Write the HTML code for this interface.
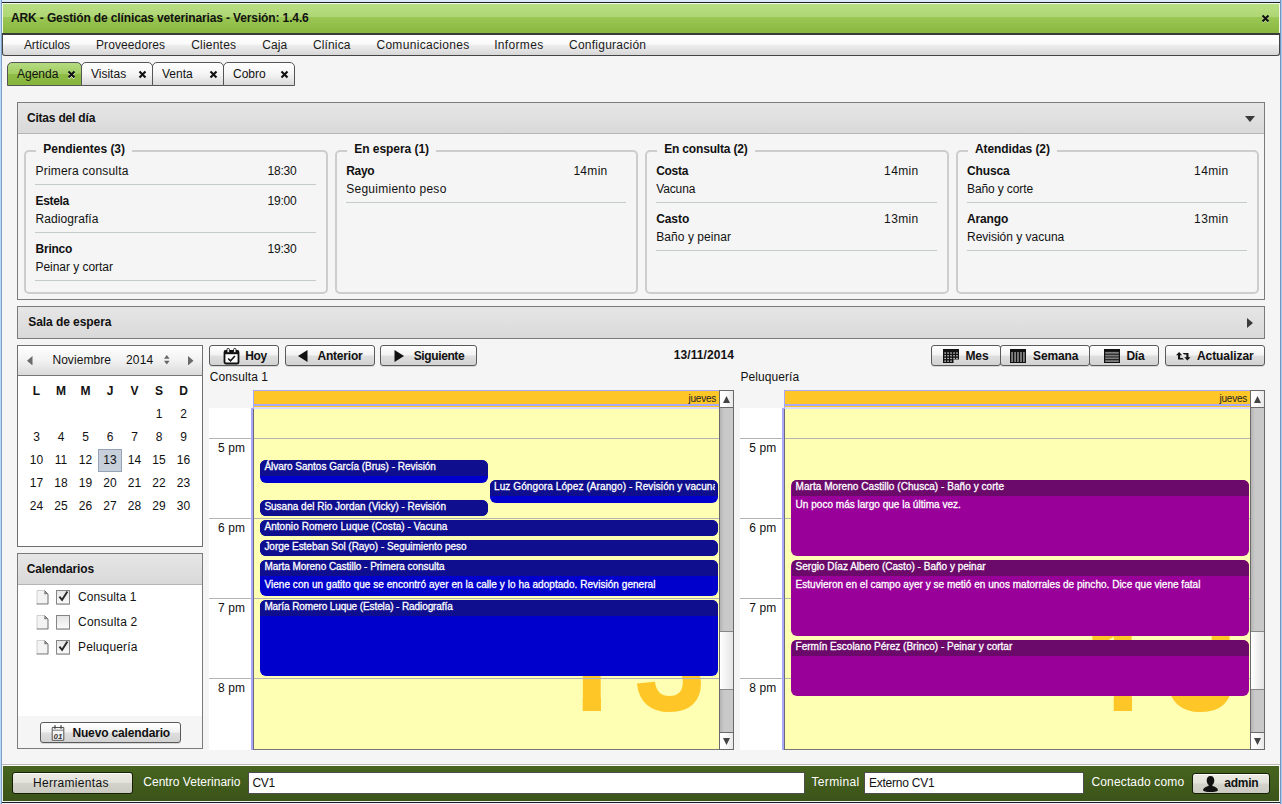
<!DOCTYPE html>
<html lang="es">
<head>
<meta charset="utf-8">
<title>ARK - Gestión de clínicas veterinarias</title>
<style>
*{box-sizing:border-box;margin:0;padding:0}
html,body{width:1282px;height:804px;overflow:hidden}
body{position:relative;background:#f5f5f5;font-family:"Liberation Sans",Arial,sans-serif;font-size:12px;color:#111;}
.abs{position:absolute}
#frame{position:absolute;left:0;top:0;width:1282px;height:804px;pointer-events:none;z-index:50}
#frame i{position:absolute;display:block}
#frame .fl{left:0;top:0;width:2px;height:804px;background:linear-gradient(90deg,#b7d8f9 1px,#7f9fc4 1px)}
#frame .fr{left:1280px;top:0;width:2px;height:804px;background:linear-gradient(90deg,#7197c4 1px,#a9c8ea 1px)}
#frame .ft{left:2px;top:0;width:1278px;height:2px;background:linear-gradient(#e0edfc,#d3e4f7)}
#frame .fb{left:2px;top:803px;width:1278px;height:1px;background:#eef3fa}
/* title */
#title{position:absolute;left:2px;top:2px;width:1278px;height:33px;border-top:1px solid #222;border-bottom:2px solid #3c3c3c;
 background:linear-gradient(#b9df84 0,#afd674 14px,#9bc856 14px,#8ab73e 100%);box-shadow:inset 1px 1px 0 #f4f8ea,inset -1px 0 0 #f4f8ea}
#title .t{position:absolute;left:9px;top:8px;font-weight:bold;font-size:12px;color:#111;white-space:nowrap}
/* menubar */
#menu{position:absolute;left:2px;top:35px;width:1278px;height:21px;border:1px solid #444;border-top:0;border-radius:0 0 3px 3px;
 background:linear-gradient(#ffffff 0,#fbfbfb 42%,#ebebeb 55%,#d7d7d7 100%);}
#menu span{position:absolute;top:3px;font-size:12px;color:#1a1a1a;white-space:nowrap}
/* tabs */
.tab{position:absolute;top:62px;height:24px;border:1px solid #555;border-bottom:1px solid #555;border-radius:5px 5px 0 0;
 background:linear-gradient(#ffffff 0,#f5f5f5 50%,#d9d9d9 100%);font-size:12px;}
.tab.on{background:linear-gradient(#b5db82 0,#a3cd62 48%,#8fbc45 52%,#86b33a 100%);}
.tab .l{position:absolute;left:9px;top:4px;white-space:nowrap;line-height:14px}
.tab svg{position:absolute;top:7px;width:9px;height:9px;margin-left:-1px}

/* panels */
.panel{position:absolute;border:1px solid #7b7b7b;background:#f5f5f5}
.phead{position:absolute;left:0;top:0;right:0;background:linear-gradient(#e6e6e6,#d9d9d9);border-bottom:1px solid #b5b5b5;font-weight:bold;font-size:12px}
.phead span{position:absolute;white-space:nowrap}
.fs{position:absolute;top:150px;height:144px;border:2px solid #cdcdcd;border-radius:5px}
.fs .lg{position:absolute;top:-10px;left:11px;padding:0 7px;background:#f5f5f5;font-weight:bold;font-size:12px;line-height:14px;white-space:nowrap}
.it{position:absolute;left:9px;right:10px;border-bottom:1px solid #c3cbcb;font-size:12px}
.it b,.it i,.it u{position:absolute;white-space:nowrap;font-style:normal;text-decoration:none;line-height:14px}
.it b{left:0;top:0}
.it u{left:0}
.it i{left:231px;top:0}
/* buttons */
.btn{position:absolute;height:21px;border:1px solid #5a5a5a;border-radius:3px;background:linear-gradient(#ffffff 0,#f3f3f3 45%,#dedede 55%,#d2d2d2 100%);font-weight:bold;font-size:12px;color:#111;box-shadow:0 1px 0 rgba(0,0,0,.12)}
.btn span{position:absolute;top:3px;white-space:nowrap;line-height:14px}
.btn svg{position:absolute}
/* mini calendar */
#mc{position:absolute;left:17px;top:345px;width:186px;height:202px;border:1px solid #6f6f6f;background:#fff}
#mch{position:absolute;left:0;top:0;right:0;height:30px;border-bottom:1px solid #777;background:linear-gradient(#ffffff 0,#f2f2f2 50%,#dadada 100%)}
#mc .d{position:absolute;width:25px;text-align:center;font-size:12px;line-height:14px;white-space:nowrap}
#mc .h{font-weight:bold}
/* big calendars */
.cal{position:absolute;top:390px;height:360px}
.cal .tcol{position:absolute;left:0;top:18px;width:42px;bottom:0;background:#fff}
.cal .vline{position:absolute;left:42px;top:18px;width:3px;bottom:0;background:linear-gradient(90deg,#a9a9f7 0,#a9a9f7 2px,#6a6a78 2px)}
.cal .hd{position:absolute;left:44px;top:0;height:19px;z-index:2;border-left:1px solid #a9a9f7;background:linear-gradient(#a9a9f7 0,#a9a9f7 1px,#ffc627 1px,#ffc627 14px,#a9a9f7 14px,#a9a9f7 16px,#ffc627 16px,#ffc627 17px,#dcdeff 17px)}
.cal .hd span{position:absolute;right:3px;top:3px;font-size:10px;line-height:12px;color:#222}
.cal .day{position:absolute;left:45px;top:17px;bottom:0;background:#ffffb3;border-bottom:1px solid #777;overflow:hidden}
.cal .hl{position:absolute;left:0;height:1px;background:#b4b4b4}
.cal .tm{position:absolute;left:0;width:38px;text-align:right;font-size:12px;line-height:14px;white-space:nowrap}
.cal .big{position:absolute;font-weight:bold;font-size:130px;line-height:130px;color:#ffc627;white-space:nowrap;letter-spacing:0}
.cal .one{clip-path:polygon(0 0,100% 0,100% 94px,48.4px 94px,48.4px 100%,30.1px 100%,30.1px 94px,0 94px)}
.cal .three{font-size:143px;line-height:143px;transform:scaleX(.9);transform-origin:0 0;clip-path:polygon(55% 0,100% 0,100% 100%,0 100%,0 56px,55% 56px)}
.ev{position:absolute;border-radius:6px;-webkit-text-stroke:.3px #fff;overflow:hidden;color:#fff;font-size:10px;line-height:12px;white-space:nowrap}
.ev .eh{position:absolute;left:0;top:0;right:0;height:16px;padding:1px 0 0 4px;overflow:hidden}
.ev .eb{position:absolute;left:4px;top:19px}
.b1{background:#0000cc}.b1 .eh{background:#0e0e8f}
.b2{background:#990099}.b2 .eh{background:#6b0a6b}
.sb{position:absolute;top:0;width:15px;bottom:0;background:linear-gradient(90deg,#b4b4b4,#c9c9c9 4px);border:1px solid #6a6a6a}
.sb .a{position:absolute;left:0;right:0;height:17px;background:linear-gradient(90deg,#fff 30%,#e8e8e8);border:0 solid #6a6a6a}
.sb .a svg{position:absolute;left:3px;top:5px}
.sb .th{position:absolute;left:0;right:0;background:linear-gradient(90deg,#fff,#e4e4e4);border:1px solid #888;border-width:1px 0}
.btn.fb{border-color:#141f06;background:linear-gradient(#fff 0,#fff 1px,#ebebe4 1px,#e2e2da 48%,#d3d3cb 52%,#cbcbc3 100%);box-shadow:none}
/* bottom */
#foot{position:absolute;left:2px;top:764px;width:1278px;height:39px;background:linear-gradient(#47651f,#3b5319);border-top:1px solid #b9b9b9;border-bottom:1px solid #1c1c1c;box-shadow:inset 1px 0 0 #f0f0f0,inset -1px 0 0 #f0f0f0,inset 0 -1px 0 #f0f0f0}
#foot .w{position:absolute;left:0;top:0;right:0;height:1px;background:#fff}
#foot .lb{position:absolute;top:10px;color:#fff;font-size:12px;white-space:nowrap;line-height:14px}
#foot .in{position:absolute;top:7px;height:22px;background:#fff;border:1px solid #4d4d4d;font-size:12px;line-height:14px;padding:3px 0 0 4px;color:#111}
</style>
</head>
<body>
<div id="title"><svg class="abs" style="left:1259px;top:10.500px" width="9" height="9" viewBox="0 0 9 9"><path d="M1.5 2.3l6 6M7.5 2.3l-6 6" stroke="#cfe6a8" stroke-width="2" fill="none"/><path d="M1.5 1.5l6 6M7.5 1.5l-6 6" stroke="#111" stroke-width="2.1" fill="none"/></svg><div class="t" style="letter-spacing:-0.13px">ARK - Gestión de clínicas veterinarias - Versión: 1.4.6</div></div>
<div id="menu">
<span style="left:21px;margin-left:-0.1px;letter-spacing:-0.07px">Artículos</span><span style="left:93px;letter-spacing:0.1px">Proveedores</span><span style="left:188px;margin-left:0.2px;letter-spacing:0.21px">Clientes</span><span style="left:259px;margin-left:0.3px;letter-spacing:0.06px">Caja</span><span style="left:310px;margin-left:-0.1px;letter-spacing:0.15px">Clínica</span><span style="left:373px;margin-left:0.4px;letter-spacing:0.32px">Comunicaciones</span><span style="left:492px;margin-left:-0.8px;letter-spacing:0.33px">Informes</span><span style="left:566px;letter-spacing:0.25px">Configuración</span>
</div>
<div class="tab on" style="left:7px;width:75px"><span class="l">Agenda</span><svg style="left:60px" viewBox="0 0 9 9"><path d="M1.5 2.5l6 6M7.5 2.5l-6 6" stroke="#e8f3d8" stroke-width="2.1" fill="none"/><path d="M1.5 1.5l6 6M7.5 1.5l-6 6" stroke="#111" stroke-width="2.1" fill="none"/></svg></div>
<div class="tab" style="left:81px;width:72px"><span class="l">Visitas</span><svg style="left:57px" viewBox="0 0 9 9"><path d="M1.5 1.5l6 6M7.5 1.5l-6 6" stroke="#111" stroke-width="2.1" fill="none"/></svg></div>
<div class="tab" style="left:152px;width:72px"><span class="l">Venta</span><svg style="left:57px" viewBox="0 0 9 9"><path d="M1.5 1.5l6 6M7.5 1.5l-6 6" stroke="#111" stroke-width="2.1" fill="none"/></svg></div>
<div class="tab" style="left:223px;width:72px"><span class="l">Cobro</span><svg style="left:57px" viewBox="0 0 9 9"><path d="M1.5 1.5l6 6M7.5 1.5l-6 6" stroke="#111" stroke-width="2.1" fill="none"/></svg></div>

<!-- Citas del día -->
<div class="panel" style="left:17px;top:102px;width:1248px;height:198px">
 <div class="phead" style="height:31px"><span style="left:9px;top:8px;margin-left:-0.1px;letter-spacing:-0.19px">Citas del día</span>
  <svg class="abs" style="right:9px;top:13px" width="10" height="6" viewBox="0 0 10 6"><path d="M0 0h10L5 6z" fill="#3a3a3a"/></svg></div>
</div>
<div class="fs" style="left:24px;width:304px"><div class="lg" style="margin-left:-0.75px;letter-spacing:-0.02px">Pendientes (3)</div>
 <div class="it" style="top:12px;height:21px"><u style="top:0;margin-left:0.5px;letter-spacing:0.19px">Primera consulta</u><i style="margin-left:1.5px;letter-spacing:-0.21px">18:30</i></div>
 <div class="it" style="top:42px;height:39px"><b style="margin-left:0.5px;letter-spacing:-0.34px">Estela</b><u style="top:18px;margin-left:0.5px;letter-spacing:0.09px">Radiografía</u><i style="margin-left:1.5px;letter-spacing:-0.21px">19:00</i></div>
 <div class="it" style="top:90px;height:39px"><b style="margin-left:0.5px;letter-spacing:-0.23px">Brinco</b><u style="top:18px;margin-left:0.5px;letter-spacing:-0.04px">Peinar y cortar</u><i style="margin-left:1.5px;letter-spacing:-0.21px">19:30</i></div>
</div>
<div class="fs" style="left:335px;width:303px"><div class="lg" style="margin-left:-0.8px;letter-spacing:-0.04px">En espera (1)</div>
 <div class="it" style="top:12px;height:39px"><b style="margin-left:0.2px;letter-spacing:-0.3px">Rayo</b><u style="top:18px;margin-left:0.2px;letter-spacing:0.27px">Seguimiento peso</u><i style="left:226px;margin-left:1.4px;letter-spacing:0.3px">14min</i></div>
</div>
<div class="fs" style="left:645px;width:304px"><div class="lg" style="margin-left:-0.8px;letter-spacing:-0.17px">En consulta (2)</div>
 <div class="it" style="top:12px;height:39px"><b style="margin-left:0.2px;letter-spacing:-0.29px">Costa</b><u style="top:18px;margin-left:0.2px;letter-spacing:-0.13px">Vacuna</u><i style="left:227px;margin-left:1.1px;letter-spacing:0.37px">14min</i></div>
 <div class="it" style="top:60px;height:39px"><b style="margin-left:0.2px;letter-spacing:-0.08px">Casto</b><u style="top:18px;margin-left:0.2px;letter-spacing:0.07px">Baño y peinar</u><i style="left:227px;margin-left:1.1px;letter-spacing:0.37px">13min</i></div>
</div>
<div class="fs" style="left:956px;width:303px"><div class="lg" style="margin-left:-1px;letter-spacing:-0.09px">Atendidas (2)</div>
 <div class="it" style="top:12px;height:39px"><b style="letter-spacing:-0.15px">Chusca</b><u style="top:18px;letter-spacing:-0.12px">Baño y corte</u><i style="left:226px;margin-left:1.1px;letter-spacing:0.37px">14min</i></div>
 <div class="it" style="top:60px;height:39px"><b style="letter-spacing:-0.15px">Arango</b><u style="top:18px;letter-spacing:-0.01px">Revisión y vacuna</u><i style="left:226px;margin-left:1.1px;letter-spacing:0.37px">13min</i></div>
</div>
<!-- Sala de espera -->
<div class="panel" style="left:17px;top:306px;width:1248px;height:33px">
 <div class="phead" style="height:31px;border-bottom:0"><span style="left:10px;top:8px;margin-left:0.2px;letter-spacing:-0.06px">Sala de espera</span>
  <svg class="abs" style="right:11px;top:11px" width="6" height="10" viewBox="0 0 6 10"><path d="M0 0v10L6 5z" fill="#3a3a3a"/></svg></div>
</div>
<!-- mini calendar -->
<div id="mc"><div id="mch">
 <svg class="abs" style="left:9px;top:9.500px" width="5.500" height="9.500" viewBox="0 0 6 10" preserveAspectRatio="none"><path d="M6 0v10L0 5z" fill="#6a6a6a"/></svg>
 <span class="abs" style="left:34px;top:7px;font-size:12px;white-space:nowrap;margin-left:0.4px;letter-spacing:0.07px">Noviembre</span>
 <span class="abs" style="left:108px;top:7px;font-size:12px;white-space:nowrap;letter-spacing:0.16px">2014</span>
 <svg class="abs" style="left:146px;top:9px" width="5.600" height="9.600" viewBox="0 0 6 9" preserveAspectRatio="none"><path d="M0 3.600h6L3 0zM0 5.400h6L3 9z" fill="#666"/></svg>
 <svg class="abs" style="left:170px;top:9.500px" width="5.500" height="9.500" viewBox="0 0 6 10" preserveAspectRatio="none"><path d="M0 0v10L6 5z" fill="#6a6a6a"/></svg>
</div>
<div class="d h" style="margin-top:1px;left:6.0px;top:37px">L</div>
<div class="d h" style="margin-top:1px;left:30.5px;top:37px">M</div>
<div class="d h" style="margin-top:1px;left:55.0px;top:37px">M</div>
<div class="d h" style="margin-top:1px;left:79.5px;top:37px">J</div>
<div class="d h" style="margin-top:1px;left:104.0px;top:37px">V</div>
<div class="d h" style="margin-top:1px;left:128.5px;top:37px">S</div>
<div class="d h" style="margin-top:1px;left:153.0px;top:37px">D</div>
<div class="d" style="left:128.5px;top:61px">1</div>
<div class="d" style="left:153.0px;top:61px">2</div>
<div class="d" style="left:6.0px;top:84px">3</div>
<div class="d" style="left:30.5px;top:84px">4</div>
<div class="d" style="left:55.0px;top:84px">5</div>
<div class="d" style="left:79.5px;top:84px">6</div>
<div class="d" style="left:104.0px;top:84px">7</div>
<div class="d" style="left:128.5px;top:84px">8</div>
<div class="d" style="left:153.0px;top:84px">9</div>
<div class="d" style="left:6.0px;top:107px">10</div>
<div class="d" style="left:30.5px;top:107px">11</div>
<div class="d" style="left:55.0px;top:107px">12</div>
<div class="abs" style="left:80px;top:103px;width:24px;height:23px;background:#c6cfda;border:1px solid #94a3b7"></div>
<div class="d" style="left:79.5px;top:107px">13</div>
<div class="d" style="left:104.0px;top:107px">14</div>
<div class="d" style="left:128.5px;top:107px">15</div>
<div class="d" style="left:153.0px;top:107px">16</div>
<div class="d" style="left:6.0px;top:130px">17</div>
<div class="d" style="left:30.5px;top:130px">18</div>
<div class="d" style="left:55.0px;top:130px">19</div>
<div class="d" style="left:79.5px;top:130px">20</div>
<div class="d" style="left:104.0px;top:130px">21</div>
<div class="d" style="left:128.5px;top:130px">22</div>
<div class="d" style="left:153.0px;top:130px">23</div>
<div class="d" style="left:6.0px;top:153px">24</div>
<div class="d" style="left:30.5px;top:153px">25</div>
<div class="d" style="left:55.0px;top:153px">26</div>
<div class="d" style="left:79.5px;top:153px">27</div>
<div class="d" style="left:104.0px;top:153px">28</div>
<div class="d" style="left:128.5px;top:153px">29</div>
<div class="d" style="left:153.0px;top:153px">30</div>
</div>
<!-- Calendarios -->
<div class="panel" style="left:17px;top:553px;width:186px;height:196px;background:#fff">
 <div class="phead" style="height:31px"><span style="left:9px;top:8px;margin-left:-0.2px;letter-spacing:-0.14px">Calendarios</span></div>
 <div class="abs" style="left:0;right:0;top:162px;bottom:0;background:#f5f5f5"></div>
 <svg class="abs" style="left:18px;top:36px" width="13" height="15" viewBox="0 0 13 15"><path d="M1 .5h7.500l3.500 3.500v10H1z" fill="#f3f3f3"/><path d="M1 14V.5h7.500" fill="none" stroke="#d0d0d0"/><path d="M8.500.5l3.500 3.500v10H.7" fill="none" stroke="#6e6e6e"/><path d="M8.300.8v3.400h3.400z" fill="#808080"/><path d="M1 14.800h11.500" stroke="#c4c4c4" stroke-width=".8"/></svg>
<svg class="abs" style="left:38px;top:36px" width="14" height="15" viewBox="0 0 14 15"><defs><linearGradient id="cg0" x1="0" y1="0" x2="0" y2="1"><stop offset="0" stop-color="#e4e4e4"/><stop offset="1" stop-color="#fbfbfb"/></linearGradient></defs><rect x=".5" y=".5" width="13" height="13.500" fill="url(#cg0)" stroke="#858585"/><path d="M.5 14.300h13" stroke="#9a9a9a" stroke-width=".7"/><path d="M3.400 6.600l2.700 3.200L11.400 1.600" fill="none" stroke="#2a2a2a" stroke-width="1.900"/></svg>
<span class="abs" style="left:60px;top:36px;font-size:12px;line-height:14px;white-space:nowrap;letter-spacing:0.12px">Consulta 1</span>
<svg class="abs" style="left:18px;top:61px" width="13" height="15" viewBox="0 0 13 15"><path d="M1 .5h7.500l3.500 3.500v10H1z" fill="#f3f3f3"/><path d="M1 14V.5h7.500" fill="none" stroke="#d0d0d0"/><path d="M8.500.5l3.500 3.500v10H.7" fill="none" stroke="#6e6e6e"/><path d="M8.300.8v3.400h3.400z" fill="#808080"/><path d="M1 14.800h11.500" stroke="#c4c4c4" stroke-width=".8"/></svg>
<svg class="abs" style="left:38px;top:61px" width="14" height="15" viewBox="0 0 14 15"><defs><linearGradient id="cg1" x1="0" y1="0" x2="0" y2="1"><stop offset="0" stop-color="#e4e4e4"/><stop offset="1" stop-color="#fbfbfb"/></linearGradient></defs><rect x=".5" y=".5" width="13" height="13.500" fill="url(#cg1)" stroke="#858585"/><path d="M.5 14.300h13" stroke="#9a9a9a" stroke-width=".7"/></svg>
<span class="abs" style="left:60px;top:61px;font-size:12px;line-height:14px;white-space:nowrap;letter-spacing:0.21px">Consulta 2</span>
<svg class="abs" style="left:18px;top:86px" width="13" height="15" viewBox="0 0 13 15"><path d="M1 .5h7.500l3.500 3.500v10H1z" fill="#f3f3f3"/><path d="M1 14V.5h7.500" fill="none" stroke="#d0d0d0"/><path d="M8.500.5l3.500 3.500v10H.7" fill="none" stroke="#6e6e6e"/><path d="M8.300.8v3.400h3.400z" fill="#808080"/><path d="M1 14.800h11.500" stroke="#c4c4c4" stroke-width=".8"/></svg>
<svg class="abs" style="left:38px;top:86px" width="14" height="15" viewBox="0 0 14 15"><defs><linearGradient id="cg2" x1="0" y1="0" x2="0" y2="1"><stop offset="0" stop-color="#e4e4e4"/><stop offset="1" stop-color="#fbfbfb"/></linearGradient></defs><rect x=".5" y=".5" width="13" height="13.500" fill="url(#cg2)" stroke="#858585"/><path d="M.5 14.300h13" stroke="#9a9a9a" stroke-width=".7"/><path d="M3.400 6.600l2.700 3.200L11.400 1.600" fill="none" stroke="#2a2a2a" stroke-width="1.900"/></svg>
<span class="abs" style="left:60px;top:86px;font-size:12px;line-height:14px;white-space:nowrap;letter-spacing:0.14px">Peluquería</span>
 <div class="btn" style="left:22px;top:168px;width:141px"><span style="left:32px;margin-left:-0.6px;letter-spacing:-0.15px">Nuevo calendario</span><svg style="left:10px;top:2px" width="14" height="16" viewBox="0 0 14 16"><path d="M1.2 2.5h11.6v12.8H1.2z" fill="#f4f4f4" stroke="#555" stroke-width="1"/><path d="M1.2 5.2h11.6" stroke="#777" stroke-width="1"/><path d="M4 .3v3.4M10 .3v3.4" stroke="#444" stroke-width="1.3"/><text x="7" y="13.6" font-size="8" font-family="Liberation Sans,sans-serif" text-anchor="middle" fill="#333" font-style="italic">01</text></svg></div>
</div>
<!-- toolbar -->
<div class="btn" style="left:209px;top:345px;width:70px"><span style="left:35px;margin-left:0.2px;letter-spacing:-0.4px">Hoy</span><svg style="left:13px;top:2px" width="17" height="17" viewBox="0 0 17 17"><rect x="1.5" y="3" width="14" height="12.5" rx="1.6" fill="#fbfbfb" stroke="#111" stroke-width="1.8"/><rect x="1" y="2.6" width="15" height="3.6" fill="#111"/><rect x="4" y=".4" width="2.4" height="4.2" rx="1.2" fill="#fff" stroke="#111" stroke-width=".9"/><rect x="10.6" y=".4" width="2.4" height="4.2" rx="1.2" fill="#fff" stroke="#111" stroke-width=".9"/><path d="M5.2 10.4l2.3 2.4 4.4-4.8" stroke="#111" stroke-width="1.5" fill="none"/></svg></div>
<div class="btn" style="left:285px;top:345px;width:90px"><span style="left:31px;margin-left:0.5px;letter-spacing:-0.21px">Anterior</span>
 <svg style="left:12px;top:4px" width="10" height="12" viewBox="0 0 10 12"><path d="M9.5 0v12L0 6z" fill="#111"/></svg></div>
<div class="btn" style="left:380px;top:345px;width:97px"><span style="left:32px;margin-left:0.75px;letter-spacing:-0.39px">Siguiente</span>
 <svg style="left:13px;top:4px" width="10" height="12" viewBox="0 0 10 12"><path d="M.5 0v12L10 6z" fill="#111"/></svg></div>
<div class="abs" style="left:673px;top:348px;font-weight:bold;font-size:12px;line-height:14px;white-space:nowrap;margin-left:0.75px;letter-spacing:0.09px">13/11/2014</div>
<div class="btn" style="left:931px;top:345px;width:70px"><span style="left:33px;margin-left:0.4px;letter-spacing:-0.08px">Mes</span><svg style="left:11px;top:3px" width="16" height="14" viewBox="0 0 16 14"><path d="M0 0h16v10.500h-5.500V14H0z" fill="#111"/><g fill="#d6d6d6"><rect x="1.4" y="3.4" width="1.500" height="1.300"/><rect x="4.3" y="3.4" width="1.500" height="1.300"/><rect x="7.3" y="3.4" width="1.500" height="1.300"/><rect x="10.3" y="3.4" width="1.500" height="1.300"/><rect x="13.2" y="3.4" width="1.500" height="1.300"/><rect x="1.4" y="6.1" width="1.500" height="1.300"/><rect x="4.3" y="6.1" width="1.500" height="1.300"/><rect x="7.3" y="6.1" width="1.500" height="1.300"/><rect x="10.3" y="6.1" width="1.500" height="1.300"/><rect x="13.2" y="6.1" width="1.500" height="1.300"/><rect x="1.4" y="8.8" width="1.500" height="1.300"/><rect x="4.3" y="8.8" width="1.500" height="1.300"/><rect x="7.3" y="8.8" width="1.500" height="1.300"/><rect x="10.3" y="8.8" width="1.500" height="1.300"/><rect x="13.2" y="8.8" width="1.500" height="1.300"/><rect x="1.4" y="11.5" width="1.500" height="1.300"/><rect x="4.3" y="11.5" width="1.500" height="1.300"/><rect x="7.3" y="11.5" width="1.500" height="1.300"/></g></svg></div>
<div class="btn" style="left:1000px;top:345px;width:90px"><span style="left:32px;margin-left:0.1px;letter-spacing:-0.13px">Semana</span><svg style="left:9px;top:3px" width="16" height="14" viewBox="0 0 16 14"><rect width="16" height="14" fill="#111"/><g fill="#808080"><rect x="1.2" y="3" width="1.8" height="10"/><rect x="4.2" y="3" width="1.8" height="10"/><rect x="7.1" y="3" width="1.8" height="10"/><rect x="10.1" y="3" width="1.8" height="10"/><rect x="13.0" y="3" width="1.8" height="10"/></g></svg></div>
<div class="btn" style="left:1089px;top:345px;width:70px"><span style="left:36px;margin-left:0.5px;letter-spacing:-0.3px">Día</span><svg style="left:14px;top:3px" width="16" height="14" viewBox="0 0 16 14"><rect width="16" height="14" fill="#111"/><g fill="#808080"><rect x="1.2" y="2.9" width="13.6" height="1.8"/><rect x="1.2" y="5.7" width="13.6" height="1.8"/><rect x="1.2" y="8.4" width="13.6" height="1.8"/><rect x="1.2" y="11.2" width="13.6" height="1.8"/></g></svg></div>
<div class="btn" style="left:1165px;top:345px;width:100px"><span style="left:31px;margin-left:-0.1px;letter-spacing:-0.06px">Actualizar</span><svg style="left:10px;top:6px" width="14.500" height="8.800" viewBox="0 0 15 10" preserveAspectRatio="none"><path d="M3.2 0L0 3.6h2.1V8.6h6.2L6.6 6.7H4.3V3.6h2.1z" fill="#111"/><path d="M11.8 9.6L15 6h-2.1V1H6.7l1.7 1.9h2.3V6H8.6z" fill="#111"/></svg></div>
<div class="abs" style="left:209px;top:370px;font-size:12px;line-height:14px;white-space:nowrap;margin-left:0.7px;letter-spacing:0.11px">Consulta 1</div>
<div class="abs" style="left:740px;top:370px;font-size:12px;line-height:14px;white-space:nowrap;margin-left:0.5px;letter-spacing:0.07px">Peluquería</div>
<!-- calendar 1 -->
<div class="cal" style="left:209px;width:525px">
 <div class="tcol"></div>
 <div class="hd" style="width:466px"><span style="letter-spacing:-0.24px">jueves</span></div>
 <div class="day" style="width:465px">
  <div class="abs" style="left:0;top:0"><span class="big one" style="left:298.6px;top:194px">1</span><span class="big three" style="left:380px;top:182px">3</span></div>
  <div class="hl" style="top:31px;width:466px"></div><div class="hl" style="top:111px;width:466px"></div><div class="hl" style="top:191px;width:466px"></div><div class="hl" style="top:271px;width:466px"></div>
  <div class="ev b1" style="left:6px;top:53px;width:228px;height:23px"><div class="eh" style="margin-left:0.4px;letter-spacing:-0.02px">Álvaro Santos García (Brus) - Revisión</div></div>
  <div class="ev b1" style="left:236px;top:73px;width:228px;height:23px"><div class="eh"><span style="display:block;overflow:hidden;width:221px;letter-spacing:.1px">Luz Góngora López (Arango) - Revisión y vacuna</span></div></div>
  <div class="ev b1" style="left:6px;top:93px;width:228px;height:16px"><div class="eh" style="margin-left:0.4px">Susana del Rio Jordan (Vicky) - Revisión</div></div>
  <div class="ev b1" style="left:6px;top:113px;width:458px;height:16px"><div class="eh" style="margin-left:0.4px;letter-spacing:0.07px">Antonio Romero Luque (Costa) - Vacuna</div></div>
  <div class="ev b1" style="left:6px;top:133px;width:458px;height:16px"><div class="eh" style="margin-left:0.4px;letter-spacing:-0.03px">Jorge Esteban Sol (Rayo) - Seguimiento peso</div></div>
  <div class="ev b1" style="left:6px;top:153px;width:458px;height:36px"><div class="eh" style="margin-left:0.4px;letter-spacing:-0.04px">Marta Moreno Castillo - Primera consulta</div><div class="eb" style="margin-left:0.4px;letter-spacing:0.05px">Viene con un gatito que se encontró ayer en la calle y lo ha adoptado. Revisión general</div></div>
  <div class="ev b1" style="left:6px;top:193px;width:458px;height:76px"><div class="eh" style="margin-left:0.4px;letter-spacing:-0.1px">María Romero Luque (Estela) - Radiografía</div></div>
 </div>
 <div class="vline"></div>
 <div class="tm" style="top:51px;margin-left:-1.87px;letter-spacing:0.11px">5 pm</div><div class="tm" style="top:131px;margin-left:-1.87px;letter-spacing:0.11px">6 pm</div><div class="tm" style="top:211px;margin-left:-1.87px;letter-spacing:0.11px">7 pm</div><div class="tm" style="top:291px;margin-left:-1.87px;letter-spacing:0.11px">8 pm</div>
 <div class="hl" style="top:48px;width:42px"></div><div class="hl" style="top:128px;width:42px"></div><div class="hl" style="top:208px;width:42px"></div><div class="hl" style="top:288px;width:42px"></div>
 <div class="sb" style="left:510px"><div class="a" style="top:0;border-bottom-width:1px"><svg width="7" height="7" viewBox="0 0 7 7"><path d="M0 7h7L3.5 0z" fill="#444"/></svg></div><div class="th" style="top:240px;height:59px"></div><div class="a" style="bottom:0;border-top-width:1px"><svg width="7" height="7" viewBox="0 0 7 7"><path d="M0 0h7L3.5 7z" fill="#444"/></svg></div></div>
</div>
<!-- calendar 2 -->
<div class="cal" style="left:740px;width:525px">
 <div class="tcol"></div>
 <div class="hd" style="width:466px"><span style="letter-spacing:-0.24px">jueves</span></div>
 <div class="day" style="width:465px">
  <div class="abs" style="left:0;top:0"><span class="big one" style="left:298.6px;top:194px">1</span><span class="big three" style="left:380px;top:182px">3</span></div>
  <div class="hl" style="top:31px;width:466px"></div><div class="hl" style="top:111px;width:466px"></div><div class="hl" style="top:191px;width:466px"></div><div class="hl" style="top:271px;width:466px"></div>
  <div class="ev b2" style="left:6px;top:73px;width:458px;height:76px"><div class="eh" style="margin-left:0.6px;letter-spacing:0.05px">Marta Moreno Castillo (Chusca) - Baño y corte</div><div class="eb" style="margin-left:0.6px;letter-spacing:0.02px">Un poco más largo que la última vez.</div></div>
  <div class="ev b2" style="left:6px;top:153px;width:458px;height:76px"><div class="eh" style="margin-left:0.6px;letter-spacing:0.01px">Sergio Díaz Albero (Casto) - Baño y peinar</div><div class="eb" style="margin-left:0.6px;letter-spacing:0.02px">Estuvieron en el campo ayer y se metió en unos matorrales de pincho. Dice que viene fatal</div></div>
  <div class="ev b2" style="left:6px;top:233px;width:458px;height:56px"><div class="eh" style="margin-left:0.6px;letter-spacing:0.01px">Fermín Escolano Pérez (Brinco) - Peinar y cortar</div></div>
 </div>
 <div class="vline"></div>
 <div class="tm" style="top:51px;margin-left:-1.62px;letter-spacing:0.11px">5 pm</div><div class="tm" style="top:131px;margin-left:-1.62px;letter-spacing:0.11px">6 pm</div><div class="tm" style="top:211px;margin-left:-1.62px;letter-spacing:0.11px">7 pm</div><div class="tm" style="top:291px;margin-left:-1.62px;letter-spacing:0.11px">8 pm</div>
 <div class="hl" style="top:48px;width:42px"></div><div class="hl" style="top:128px;width:42px"></div><div class="hl" style="top:208px;width:42px"></div><div class="hl" style="top:288px;width:42px"></div>
 <div class="sb" style="left:510px"><div class="a" style="top:0;border-bottom-width:1px"><svg width="7" height="7" viewBox="0 0 7 7"><path d="M0 7h7L3.5 0z" fill="#444"/></svg></div><div class="th" style="top:240px;height:59px"></div><div class="a" style="bottom:0;border-top-width:1px"><svg width="7" height="7" viewBox="0 0 7 7"><path d="M0 0h7L3.5 7z" fill="#444"/></svg></div></div>
</div>
<!-- footer -->
<div id="foot"><div class="w"></div>
 <div class="btn fb" style="left:10px;top:7px;width:121px;height:22px;font-weight:normal"><span style="left:20px;letter-spacing:0.31px">Herramientas</span></div>
 <div class="lb" style="left:141px;margin-left:0.25px;letter-spacing:0.03px">Centro Veterinario</div>
 <div class="in" style="left:246px;width:557px;margin-left:-0.5px;letter-spacing:-0.3px">CV1</div>
 <div class="lb" style="left:809px;margin-left:0.5px;letter-spacing:0.33px">Terminal</div>
 <div class="in" style="left:863px;width:220px;margin-left:-1px;letter-spacing:-0.24px">Externo CV1</div>
 <div class="lb" style="left:1089px;margin-left:0.4px;letter-spacing:0.16px">Conectado como</div>
 <div class="btn fb" style="left:1190px;top:8px;width:78px;height:21px"><span style="left:32px;top:2px;margin-left:-0.7px;letter-spacing:-0.25px">admin</span><svg style="left:10px;top:2px" width="15" height="16" viewBox="0 0 15 16"><path d="M7.5 0C10 0 11.3 1.9 11.3 4.4c0 1.9-.8 3.6-1.9 4.4v1.2c2.6.7 5.2 1.700 5.600 3.900 0 1.200-3.300 2.100-7.500 2.100S0 15.100 0 13.900c.4-2.200 3-3.200 5.600-3.900V8.800C4.500 8 3.700 6.300 3.700 4.400 3.700 1.900 5 0 7.500 0z" fill="#111"/></svg></div>
</div>
<div id="frame"><i class="fl"></i><i class="fr"></i><i class="ft"></i><i class="fb"></i></div>
</body>
</html>
